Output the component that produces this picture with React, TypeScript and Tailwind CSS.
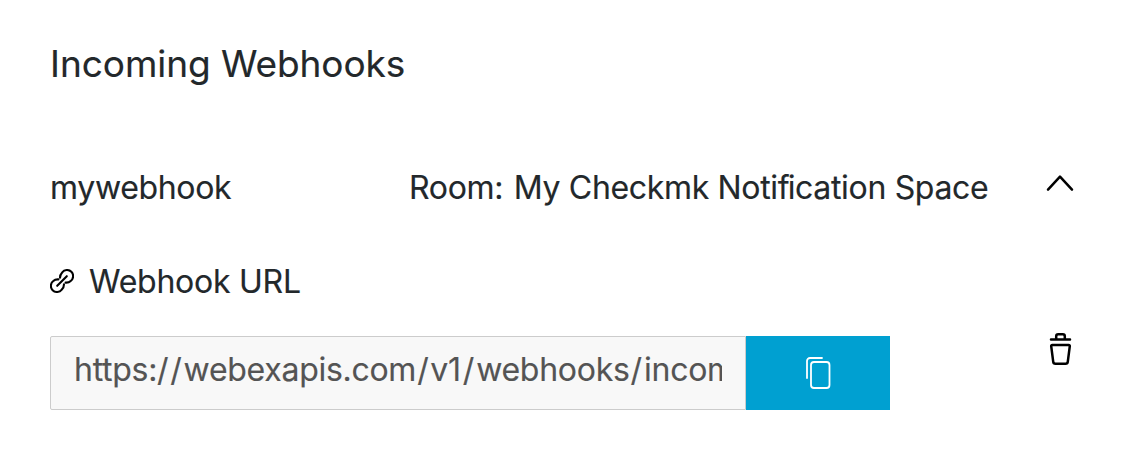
export default function App() {
  return (
    <main className="h-[460px] w-[1124px] overflow-hidden bg-white pt-[36px] pl-[50px] font-['Inter',sans-serif] text-[#23282b] [-webkit-text-stroke:0.15px]">
      <h1 className="h-[56px] w-fit text-[37px] leading-[56px] tracking-[-0.06px] whitespace-nowrap">Incoming Webhooks</h1>
      <div className="mt-[72px] flex h-[47px] items-center text-[32px] leading-[47px] tracking-[-0.33px] whitespace-nowrap">
        <span className="w-[359px]">mywebhook</span>
        <span className="w-[637px]">
          Room:<span className="pl-[2px]"> My Checkmk Noti</span><span className="tracking-[-2px]">f</span>ication Space
        </span>
        <button aria-label="Collapse" className="-mt-[9px]">
          <svg className="block h-[18px] w-[28px]" viewBox="0 0 28 18" fill="none" stroke="#000" strokeWidth="2.5" strokeLinecap="round" strokeLinejoin="round">
            <path d="M2 15.7 14 2.7 26 15.7" />
          </svg>
        </button>
      </div>
      <div className="mt-[47px] flex h-[47px] items-center gap-[16px] text-[32px] leading-[47px] tracking-[-0.25px]">
        <svg className="-mt-px h-[24px] w-[24px]" viewBox="0 0 24 24" fill="none" stroke="#000" strokeWidth="2.1" strokeLinecap="round">
          <path d="m7.2 16.8 9.6-9.6" />
          <path d="M10 8.7C10 7 10.6 5 12.2 3.4a6.1 6.1 0 1 1 8.5 8.6c-1.3 1.2-3 1.8-5.1 1.6" />
          <path d="M14 15.3c0 1.7-.6 3.7-2.2 5.3a6.1 6.1 0 1 1-8.5-8.6c1.3-1.2 3-1.8 5.1-1.6" />
        </svg>
        <span className="-ml-px">Webhook URL</span>
      </div>
      <div className="mt-[31px] flex h-[74px]">
        <div className="w-[696px] rounded-l-[2px] border border-[#cccccc] bg-[#f8f8f8] px-[23px]">
          <div className="overflow-hidden text-[32px] leading-[66px] tracking-[-0.28px] whitespace-nowrap text-[#545454]">
            https:<span className="tracking-[1.7px]">//</span>webexapis.com<span className="pl-px tracking-[1.5px]">/</span>v1<span className="pl-[2px] tracking-[2px]">/</span>webhooks<span className="pl-px tracking-[2px]">/</span>incoming
          </div>
        </div>
        <button aria-label="Copy" className="flex w-[144px] items-center justify-center bg-[#00a0d1]">
          <svg className="h-[34px] w-[26px]" viewBox="0 0 26 34" fill="none" stroke="#fff" strokeWidth="1.8" strokeLinecap="round">
            <path d="M2 22V5a3 3 0 0 1 3-3h12" />
            <rect x="6" y="6" width="18.5" height="26" rx="3" />
          </svg>
        </button>
        <button aria-label="Delete" className="-mt-[4px] ml-[159px] self-start">
          <svg className="block h-[34px] w-[24px]" viewBox="0 0 24 34" fill="none" stroke="#000" strokeWidth="2.5" strokeLinecap="round" strokeLinejoin="round">
            <path d="M2 7.5h19M7.2 7V4.3a2 2 0 0 1 2-2h4.6a2 2 0 0 1 2 2V7" />
            <path d="M3.2 13h16.6a1 1 0 0 1 1 1.1l-2 15.6a2.3 2.3 0 0 1-2.3 2.1h-10a2.3 2.3 0 0 1-2.3-2.1l-2-15.6a1 1 0 0 1 1-1.1Z" />
          </svg>
        </button>
      </div>
    </main>
  );
}
